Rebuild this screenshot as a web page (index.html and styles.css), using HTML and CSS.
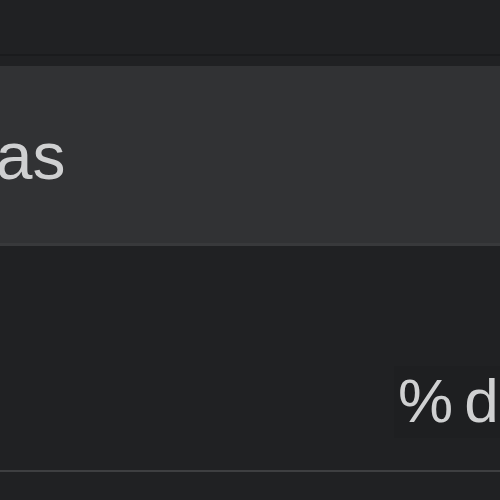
FILE: index.html
```html
<!DOCTYPE html>
<html>
<head>
<meta charset="utf-8">
<link rel="stylesheet" href="styles.css">
</head>
<body>
<div class="page">
  <div class="top">
    <div class="top-bar"></div>
  </div>
  <div class="row row-active">
    <span class="label">Ideas</span>
  </div>
  <div class="row row-value">
    <span class="value">% done</span>
  </div>
  <div class="rest"></div>
</div>
</body>
</html>
```
FILE: styles.css
```css
html, body {
  margin: 0;
  padding: 0;
  background: #202123;
  overflow: hidden;
}
.page {
  width: 500px;
  height: 500px;
  overflow: hidden;
  display: flex;
  flex-direction: column;
  font-family: "Liberation Sans", Arial, sans-serif;
  color: #cfd0d1;
}
.top {
  height: 66px;
  flex: none;
}
.top-bar {
  height: 54px;
  border-bottom: 2px solid #1a1b1d;
}
.row {
  display: flex;
  flex: none;
  white-space: nowrap;
}
.row-active {
  height: 177px;
  background: #313234;
  border-bottom: 3px solid #38393b;
  align-items: center;
}
.label {
  font-size: 66px;
  margin-left: -96px;
  line-height: 1;
  padding-top: 2px;
}
.row-value {
  height: 224px;
  border-bottom: 2px solid #3e3f41;
  padding-left: 394px;
  align-items: flex-start;
}
.value {
  font-size: 62px;
  line-height: 1;
  margin-top: 120px;
  background: #1e1f21;
  padding: 4px 0 6px 4px;
  word-spacing: -6px;
}
.rest {
  flex: 1;
}
```
